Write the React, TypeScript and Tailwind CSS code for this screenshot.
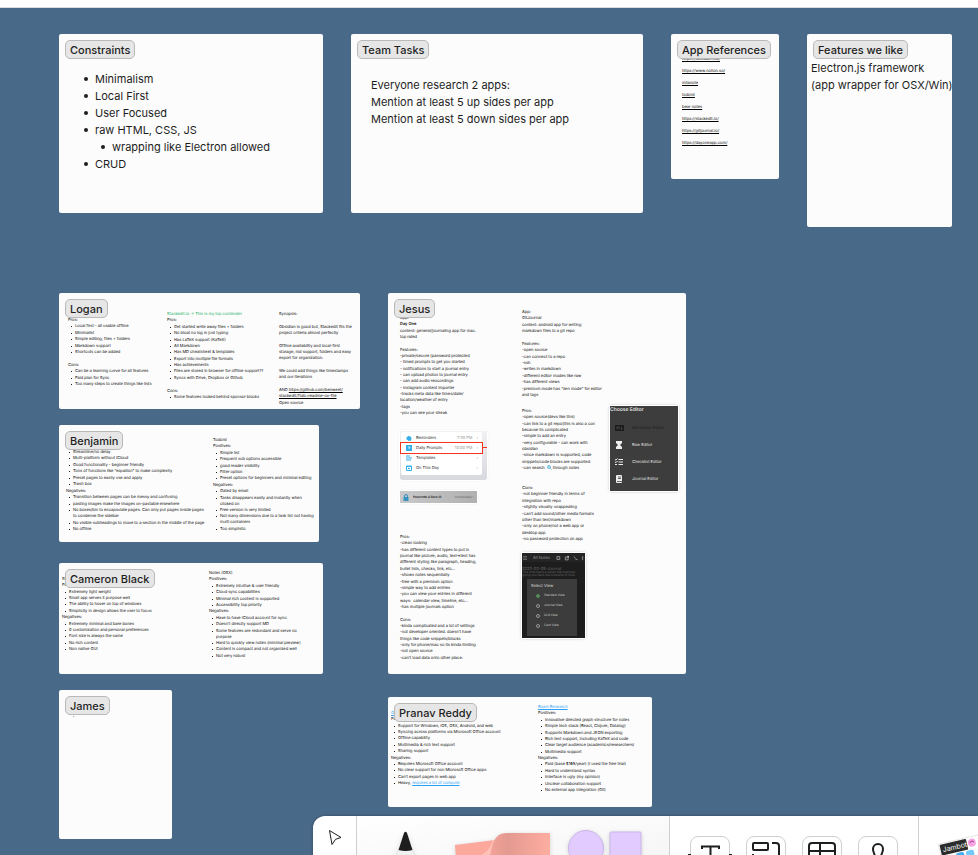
import type { ReactNode } from "react";

const link = "text-[#2aa1f5] underline";
const bullet =
  "relative before:absolute before:-left-[11px] before:top-[6px] before:size-1 before:rounded-full before:bg-[#1e1e1e]";

function Section({ title, className, children }: { title: string; className: string; children?: ReactNode }) {
  return (
    <section className={`absolute rounded-xs bg-[#fcfcfc] text-[#1e1e1e] ${className}`}>
      {children}
      <h2 className="absolute left-[6px] top-[6px] h-[19px] whitespace-nowrap rounded-[5px] border border-[#b9b9b9] bg-[#e6e6e6] px-1 text-[11px] font-medium leading-[18px] text-[#1e1e1e]">
        {title}
      </h2>
    </section>
  );
}

/** A text node on the canvas: its lines are spread evenly over its height. */
function Note({ className, children }: { className: string; children: ReactNode }) {
  return (
    <div
      className={`absolute flex flex-col justify-between whitespace-pre text-[4px] leading-[6px] text-black [text-rendering:geometricPrecision] ${className}`}
    >
      {children}
    </div>
  );
}

function Lines({ of }: { of: string[] }) {
  return (
    <>
      {of.map((line, i) => (
        <p key={i}>{line || "\u00a0"}</p>
      ))}
    </>
  );
}

function Bullets({ of }: { of: ReactNode[] }) {
  return (
    <ul className="contents">
      {of.map((item, i) => (
        <li key={i} className="relative pl-[7px] before:absolute before:left-[3px] before:top-[3px] before:size-px before:bg-[#1e1e1e]">
          {item}
        </li>
      ))}
    </ul>
  );
}

const references = [
  "https://obsidian.md/",
  "https://www.notion.so/",
  "milanote",
  "todoist",
  "bear notes",
  "https://stackedit.io/",
  "https://gitjournal.io/",
  "https://dayoneapp.com/",
];

function DayOneSettings() {
  const rows = [
    ["Reminders", "7:30 PM"],
    ["Daily Prompts", "10:00 PM"],
    ["Templates", ""],
    ["On This Day", ""],
  ];
  return (
    <div className="absolute left-[12px] top-[138px] h-[49px] w-[87px] rounded-xs bg-linear-to-b from-[#f1f1f4] to-[#d8d8df] p-px shadow-[0_0_2px_#0004] outline outline-white">
      <div className="h-[43px] w-[81px] rounded-xs bg-white pt-px">
        {rows.map(([name, time], i) => (
          <div key={name} className="flex h-[10px] items-center gap-1 pl-[5px] pr-1 text-[4px] leading-[6px] [text-rendering:geometricPrecision]">
            <svg viewBox="0 0 6 6" className="size-[6px]" fill="none" stroke="#35aee8">
              {i === 0 && <path d="M1 3.5a2 2 0 0 1 4 0v1H1zM2 5.3h3M.5 2.5h2" fill="#35aee8" />}
              {i === 1 && (
                <>
                  <rect x=".5" y=".5" width="5" height="5" fill="#35aee8" />
                  <path d="M2 2h2L3 4" stroke="#fff" strokeWidth=".7" />
                </>
              )}
              {i === 2 && <path d="M0 1h4M0 3h6M0 5h5" />}
              {i === 3 && <path d="M.5 1h5v4.5h-5zM.5 1.6h5M2 3.5h2" />}
            </svg>
            <span className="grow">{name}</span>
            <span className="text-[#999]">{time}</span>
            <span className="text-[#999]">›</span>
          </div>
        ))}
      </div>
      <div className="absolute left-0 top-[11px] h-[12px] w-[83px] border border-[#f5341d]" />
      <div className="absolute left-[83px] top-[16px] h-px w-[4px] bg-[#f5341d]" />
    </div>
  );
}

function PasscodeRow() {
  return (
    <div className="absolute left-[12px] top-[198px] flex h-[12px] w-[77px] items-center whitespace-nowrap bg-linear-to-r from-[#c9c9cb] to-[#b0b0b0] px-[3px] text-[3px] leading-[6px] shadow-[0_0_2px_#0004] outline outline-white [text-rendering:geometricPrecision]">
      <svg viewBox="0 0 6 7" className="h-[7px] w-[6px] shrink-0">
        <rect x=".5" y="3" width="5" height="4" fill="#3594bf" />
        <path d="M1.5 3V2a1.5 1.5 0 0 1 3 0v1" fill="none" stroke="#3594bf" />
      </svg>
      <span className="ml-[4px] grow font-semibold">Passcode &amp; Face ID</span>
      <span className="text-[#666]">Immediately ›</span>
    </div>
  );
}

function EditorMenu() {
  return (
    <div className="absolute left-[222px] top-[113px] h-[85px] w-[68px] bg-[#3d3d3d] text-[5px] leading-[8px] text-[#e6e6e6] shadow-[0_0_3px_#0006] outline outline-white [text-rendering:geometricPrecision]">
      <p className="font-medium text-[#eee]">Choose Editor</p>
      <ul className="flex flex-col gap-[9px] pl-[5px] pt-[10px] text-[4px]">
        <li className="flex h-2 items-center gap-2 text-[#1e1e1e]">
          <svg viewBox="0 0 9 6" className="h-[6px] w-[9px]">
            <rect width="9" height="6" fill="#1b1b1b" />
            <path d="M2 4.5v-3l1 1.5 1-1.5v3M6.5 1.5v3M5.5 3.5l1 1 1-1" fill="none" stroke="#555" strokeWidth=".6" />
          </svg>
          Markdown Editor
        </li>
        <li className="flex h-2 items-center gap-2">
          <svg viewBox="0 0 9 8" className="h-2 w-[9px]">
            <path d="M1 0h6v2L5 4l2 2v2H1V6l2-2-2-2z" fill="#eee" />
          </svg>
          Raw Editor
        </li>
        <li className="flex h-2 items-center gap-2">
          <svg viewBox="0 0 9 8" className="h-2 w-[9px]" fill="none" stroke="#eee">
            <path d="M3.5 1.5h4.5M3.5 4h4.5M3.5 6.5h4.5M0 1.5l1 .6L2.5.5M0 4l1 .6L2.5 3M0 6.5h2" />
          </svg>
          Checklist Editor
        </li>
        <li className="flex h-2 items-center gap-2">
          <svg viewBox="0 0 9 8" className="h-2 w-[9px]">
            <rect x="1" y="0" width="6" height="8" rx="1" fill="#eee" />
            <path d="M3 2h3M3 3.5h3M2 6.5h5" stroke="#444" strokeWidth=".8" />
          </svg>
          Journal Editor
        </li>
      </ul>
    </div>
  );
}

function ViewMenu() {
  return (
    <div className="absolute left-[134px] top-[260px] h-[85px] w-[63px] whitespace-nowrap bg-[#1d1d1d] text-[4px] leading-[5px] text-[#666] shadow-[0_0_3px_#0006] outline outline-white [text-rendering:geometricPrecision]">
      <div className="flex h-[9px] items-center gap-[6px] bg-[#242424] px-px text-[#999]">
        <svg viewBox="0 0 4 4" className="size-1 shrink-0" stroke="#888" strokeWidth=".6">
          <path d="M0 .5h4M0 2h4M0 3.5h4" />
        </svg>
        <span>All Notes</span>
        <svg viewBox="0 0 30 6" className="h-[6px] min-w-0 grow" fill="none" stroke="#999">
          <path d="M1 1.5h3v3H1zM10 2h3v3h-3zM19 1.5l2 2M21 4.5h2M28.5 1v4" />
          <circle cx="13" cy="1.5" r="1" fill="#bbb" stroke="none" />
        </svg>
      </div>
      <p className="pt-1">2022-02-09-Journal</p>
      <p className="text-[3px] leading-[3px]">This note starts a series that explores</p>
      <p className="text-[3px] leading-[3px]">giving you back the moments of time</p>
      <div className="absolute left-[5px] top-[26px] h-[57px] w-[50px] bg-[#3c3c3c] text-[#ccc]">
        <p className="pl-1 pt-1 text-[#ddd]">Select View</p>
        <ul className="flex flex-col gap-[5px] pl-[9px] pt-[5px] text-[3px]">
          {["Standard View", "Journal View", "Grid View", "Card View"].map((name, i) => (
            <li key={name} className="flex items-center gap-1">
              <svg viewBox="0 0 4 4" className="size-1" fill="none" strokeWidth=".7" stroke={i ? "#bbb" : "#5fae63"}>
                <circle cx="2" cy="2" r="1.5" />
                {i === 0 && <circle cx="2" cy="2" r=".6" fill="#5fae63" />}
              </svg>
              {name}
            </li>
          ))}
        </ul>
      </div>
    </div>
  );
}

function ToolCard({ label, children }: { label: string; children: ReactNode }) {
  return (
    <button aria-label={label} className="size-10 shrink-0 rounded-lg border border-[#cfcfcf] bg-white">
      <svg viewBox="0 0 40 40" className="-m-px size-10 overflow-visible" fill="none" stroke="#1e1e1e" strokeWidth="2">
        {children}
      </svg>
    </button>
  );
}

function Toolbar() {
  return (
    <nav
      aria-label="Tools"
      className="absolute bottom-0 left-[313px] right-0 flex h-[39px] overflow-hidden rounded-tl-xl bg-white shadow-[0_0_3px_#0005]"
    >
      <button aria-label="Select" className="flex w-[44px] shrink-0 justify-center border-r border-[#cfcfcf] pt-[13px]">
        <svg viewBox="0 0 15 17" className="h-[17px] w-[15px]" fill="none" stroke="#1e1e1e" strokeLinejoin="round">
          <path d="M2.5 1.5 14 8.5 8.5 10.3 5 15.5z" />
        </svg>
      </button>
      <div className="flex w-[313px] shrink-0 items-start border-r border-[#cfcfcf] bg-linear-to-br from-white to-[#f6f6f6] pl-6 pt-3">
        <button aria-label="Marker" className="w-[50px]">
          <svg viewBox="0 0 50 30" className="h-[30px] w-[50px] overflow-visible drop-shadow-md">
            <path d="M18 21q7-2 13 0l4 9H14z" fill="#f1f1f1" stroke="#ddd" strokeWidth=".6" />
            <path d="M23 5q1.5-2.5 3 0l5.5 17q-7 2-14 0z" fill="#1e1e1e" />
          </svg>
        </button>
        <button aria-label="Sticky note" className="ml-6 w-[96px]">
          <svg viewBox="0 0 96 30" className="h-[30px] w-[96px] overflow-visible drop-shadow-sm">
            <defs>
              <linearGradient id="fold" x1="0" x2="1">
                <stop offset="0" stopColor="#f3a398" />
                <stop offset=".3" stopColor="#e39a90" />
                <stop offset="1" stopColor="#ffada1" />
              </linearGradient>
            </defs>
            <path d="M0 17 40 12v18H1z" fill="#fca89c" />
            <path d="M22 30Q36 22 38 12l8 0v18z" fill="#ffc0b5" />
            <path d="M34 30c4-8 2-25 18-25h43v25z" fill="url(#fold)" />
          </svg>
        </button>
        <button aria-label="Shapes" className="ml-4 w-[76px]">
          <svg viewBox="0 0 76 30" className="h-[30px] w-[76px] overflow-visible drop-shadow-sm" fill="#e2ccff" stroke="#cab5e8">
            <circle cx="19" cy="20" r="17.5" />
            <rect x="43" y="4" width="31" height="31" rx="1" />
          </svg>
        </button>
      </div>
      <div className="flex w-[249px] shrink-0 gap-4 border-r border-[#cfcfcf] pl-5 pt-5">
        <ToolCard label="Text">
          <path d="M12 13v-2.5h17V13M20.5 10.5V30" />
          <path d="M-2 19h3M39 19h3" />
        </ToolCard>
        <ToolCard label="Section">
          <rect x="7" y="7" width="15" height="7" rx="1" />
          <path d="M26 7h4q3 0 3 3v20M7 30V18" />
        </ToolCard>
        <ToolCard label="Table">
          <rect x="7" y="7" width="26" height="24" rx="3" />
          <path d="M7 15h26M18 7v24M7 22h26" />
        </ToolCard>
        <ToolCard label="Stamp">
          <path d="M17 24c1-6-2-6-2-11a5 5 0 0 1 10 0c0 5-3 5-2 11" />
        </ToolCard>
      </div>
      <button aria-label="Widgets and stickers" className="shrink-0 pl-4">
        <svg viewBox="0 0 46 39" className="h-[39px] w-[46px]">
          <g transform="rotate(-13 18 34)">
            <rect x="5" y="25" width="44" height="30" fill="#fff" stroke="#e6e6e6" />
            <rect x="6" y="26" width="27" height="11" rx="1" fill="#2b2b2b" />
            <text x="8" y="34" fontSize="7" fill="#fff">Jambot</text>
            <circle cx="38" cy="31" r="4" fill="#f5a5e3" />
            <path d="M36 31q2-3 4 0" fill="none" stroke="#a83c91" />
            <rect x="20" y="38" width="8" height="6" rx="2" fill="#45aef0" />
            <rect x="30" y="38" width="8" height="6" rx="2" fill="#70c9f8" />
          </g>
        </svg>
      </button>
    </nav>
  );
}

export default function App() {
  return (
    <div className="flex h-screen flex-col overflow-hidden font-['Inter',sans-serif]">
      <header className="h-2 shrink-0 border-b border-[#d9dde2] bg-white" />
      <main className="relative grow overflow-hidden bg-[#496988]">
        <Section title="Constraints" className="left-[59px] top-[26px] h-[179px] w-[264px]">
          <ul className="pl-9 pt-[37px] text-[11px] leading-[17px]">
            {["Minimalism", "Local First", "User Focused", "raw HTML, CSS, JS"].map((item) => (
              <li key={item} className={bullet}>
                {item}
              </li>
            ))}
            <li>
              <ul className="pl-[17px]">
                <li className={bullet}>wrapping like Electron allowed</li>
              </ul>
            </li>
            <li className={bullet}>CRUD</li>
          </ul>
        </Section>

        <Section title="Team Tasks" className="left-[351px] top-[26px] h-[179px] w-[292px]">
          <div className="pl-5 pt-[43px] text-[11px] leading-[17px]">
            <p>Everyone research 2 apps:</p>
            <p>Mention at least 5 up sides per app</p>
            <p>Mention at least 5 down sides per app</p>
          </div>
        </Section>

        <Section title="App References" className="left-[671px] top-[26px] h-[145px] w-[108px]">
          <Note className="left-[11px] top-[22px] h-[90px]">
            {references.map((name) => (
              <a key={name} href="#" className="underline">
                {name}
              </a>
            ))}
          </Note>
        </Section>

        <Section title="Features we like" className="left-[807px] top-[26px] h-[193px] w-[145px]">
          <div className="whitespace-nowrap pl-1 pt-[26px] text-[11px] leading-[17px]">
            <p>Electron.js framework</p>
            <p>(app wrapper for OSX/Win)</p>
          </div>
        </Section>

        <Section title="Logan" className="left-[59px] top-[285px] h-[116px] w-[301px]">
          <Note className="left-[9px] top-[24px] h-[70px]">
            <Lines of={["Pros:"]} />
            <Bullets of={["Local first - all usable offline", "Minimalist", "Simple editing, files + folders", "Markdown support", "Shortcuts can be added"]} />
            <Lines of={["", "Cons:"]} />
            <Bullets of={["Can be a learning curve for all features", "Paid plan for Sync", "Too many steps to create things like lists"]} />
          </Note>
          <Note className="left-[108px] top-[18px] h-[89px]">
            <p className="text-[#14ae5c]">Stackedit.io → This is my top contender</p>
            <Lines of={["Pros:"]} />
            <Bullets
              of={[
                "Get started write away files + folders",
                "No bloat no log in just typing",
                "Has LaTeX support (KaTeX)",
                "All Markdown",
                "Has MD cheatsheet & templates",
                "Export into multiple file formats",
                "Has achievements",
                "Files are stored in browser for offline support??",
                "Syncs with Drive, Dropbox or Github",
              ]}
            />
            <Lines of={["", "Cons:"]} />
            <Bullets of={["Some features locked behind sponsor blocks"]} />
          </Note>
          <Note className="left-[220px] top-[18px] h-[95px]">
            <Lines
              of={[
                "Synopsis:",
                "",
                "Obsidian is good but, Stackedit fits the",
                "project criteria almost perfectly",
                "",
                "Offline availability and local-first",
                "storage, md support, folders and easy",
                "export for organization.",
                "",
                "We could add things like timestamps",
                "and our iterations",
                "",
              ]}
            />
            <p>
              AND <a href="#" className="underline">https://github.com/benweet/</a>
            </p>
            <a href="#" className="underline">stackedit/?tab=readme-ov-file</a>
            <Lines of={["Open source"]} />
          </Note>
        </Section>

        <Section title="Benjamin" className="left-[59px] top-[417px] h-[117px] w-[260px]">
          <Note className="left-[7px] top-[24px] h-[83px]">
            <Bullets
              of={[
                "Streamline/no delay",
                "Multi-platform without iCloud",
                "Good functionality - beginner friendly",
                "Tons of functions like “equation” to make complexity",
                "Preset pages to easily use and apply",
                "Trash box",
              ]}
            />
            <Lines of={["Negatives:"]} />
            <Bullets
              of={[
                "Transition between pages can be messy and confusing",
                "pasting images make the images un-pastable elsewhere",
                "No boxes/bin to encapsulate pages. Can only put pages inside pages\nto condense the sidebar",
                "No visible subheadings to move to a section in the middle of the page",
                "No offline",
              ]}
            />
          </Note>
          <Note className="left-[154px] top-[12px] h-[95px]">
            <Lines of={["Todoist", "Positives:"]} />
            <Bullets of={["Simple list", "Frequent sub options accessible", "good reader visibility", "Filter option", "Preset options for beginners and minimal editing"]} />
            <Lines of={["Negatives:"]} />
            <Bullets
              of={[
                "Gated by email",
                "Tasks disappears easily and instantly when\nclicked on",
                "Free version is very limited",
                "Not many dimensions due to a task list not having\nmulti containers",
                "Too simplistic",
              ]}
            />
          </Note>
        </Section>

        <Section title="Cameron Black" className="left-[59px] top-[555px] h-[111px] w-[264px]">
          <Note className="left-[3px] top-[13px] h-[76px]">
            <Lines of={["Stickies", "Positives:"]} />
            <Bullets of={["Extremely light weight", "Small app serves it purpose well", "The ability to hover on top of windows", "Simplicity in design allows the user to focus"]} />
            <Lines of={["Negatives:"]} />
            <Bullets of={["Extremely minimal and bare bones", "0 customization and personal preferences", "Font size is always the same", "No rich content", "Non native GUI"]} />
          </Note>
          <Note className="left-[150px] top-[7px] h-[89px]">
            <Lines of={["Notes (OSX)", "Positives:"]} />
            <Bullets of={["Extremely intuitive & user friendly", "Cloud sync capabilities", "Minimal rich content is supported", "Accessibility top priority"]} />
            <Lines of={["Negatives:"]} />
            <Bullets
              of={[
                "Have to have iCloud account for sync",
                "Doesn’t directly support MD",
                "Some features are redundant and serve no\npurpose",
                "Hard to quickly view notes (minimal preview)",
                "Content is compact and not organized well",
                "Not very robust",
              ]}
            />
          </Note>
        </Section>

        <Section title="James" className="left-[59px] top-[682px] h-[149px] w-[113px]">
          <Note className="left-[14px] top-[25px]">’</Note>
        </Section>

        <Section title="Jesus" className="left-[388px] top-[285px] h-[381px] w-[298px]">
          <Note className="left-[12px] top-[22px] h-[101px]">
            <Lines of={["App:"]} />
            <p className="font-semibold">Day One</p>
            <Lines
              of={[
                "content: general/journaling app for mac.",
                "top rated",
                "",
                "Features:",
                "-private/secure (password protected",
                "- timed prompts to get you started",
                "- notifications to start a journal entry",
                "- can upload photos to journal entry",
                "- can add audio reocordings",
                "- instagram content importer",
                "-tracks meta data like times/date/",
                "location/weather of entry",
                "-tags",
                "-you can see your streak",
              ]}
            />
          </Note>
          <DayOneSettings />
          <PasscodeRow />
          <Note className="left-[12px] top-[241px] h-[127px]">
            <Lines
              of={[
                "Pros:",
                "-clean looking",
                "-has different content types to put in",
                "journal like picture, audio, text->text has",
                "different styling like paragraph, heading,",
                "bullet lists, checks, link, etc...",
                "-shows notes sequentially",
                "-free with a premium option",
                "-simple way to add entries",
                "-you can view your entries in different",
                "ways:  calendar view, timeline, etc...",
                "-has multiple journals option",
                "",
                "Cons:",
                "-kinda complicated and a lot of settings",
                "-not developer oriented. doesn’t have",
                "things like code snippets/blocks",
                "-only for phone/mac so its kinda limiting",
                "-not open source",
                "-can’t load data onto other place.",
              ]}
            />
          </Note>
          <Note className="left-[134px] top-[16px] h-[89px]">
            <Lines
              of={[
                "App:",
                "GitJournal",
                "context: android app for writing",
                "markdown files to a git repo",
                "",
                "Features:",
                "-open source",
                "-can connect to a repo",
                "-ssh",
                "-writes in markdown",
                "-different editor modes like raw",
                "-has different views",
                "-premium mode has “zen mode” for editor",
                "and tags",
              ]}
            />
          </Note>
          <Note className="left-[134px] top-[115px] h-[63px]">
            <Lines
              of={[
                "Pros:",
                "-open source(devs like this)",
                "-can link to a git repo(this is also a con",
                "because its complicated",
                "-simple to add an entry",
                "-very configurable - can work with",
                "obsidian",
                "-since markdown is supported, code",
                "snippets/code blocks are supported",
              ]}
            />
            <p className="flex items-center">
              -can search{" "}
              <svg viewBox="0 0 5 5" className="mx-px size-[5px]" fill="#bfe6fa" stroke="#3f9fd0" strokeWidth=".7">
                <circle cx="2" cy="2" r="1.5" />
                <path d="m3.2 3.2 1.5 1.5" />
              </svg>
              through notes
            </p>
          </Note>
          <Note className="left-[134px] top-[192px] h-[57px]">
            <Lines
              of={[
                "Cons:",
                "-not beginner friendly in terms of",
                "integration with repo",
                "-slightly visually unappealing",
                "-can’t add sound/other media formats",
                "other than text/markdown",
                "-only on phone/not a web app or",
                "desktop app",
                "-no password protection on app",
              ]}
            />
          </Note>
          <EditorMenu />
          <ViewMenu />
        </Section>

        <Section title="Pranav Reddy" className="left-[388px] top-[689px] h-[110px] w-[264px]">
          <Note className="left-[3px] top-[13px] h-[76px]">
            <a href="#" className={link}>OneNote</a>
            <Lines of={["Positives:"]} />
            <Bullets
              of={[
                "Support for Windows, iOS, OSX, Android, and web",
                "Syncing across platforms via Microsoft Office account",
                "Offline capability",
                "Multimedia & rich text support",
                "Sharing support",
              ]}
            />
            <Lines of={["Negatives:"]} />
            <Bullets
              of={[
                "Requires Microsoft Office account",
                "No clear support for non Microsoft Office apps",
                "Can’t export pages in web app",
                <>
                  Heavy, <a href="#" className={link}>requires a lot of compute</a>
                </>,
              ]}
            />
          </Note>
          <Note className="left-[150px] top-[7px] h-[89px]">
            <a href="#" className={link}>Roam Research</a>
            <Lines of={["Positives:"]} />
            <Bullets
              of={[
                "Innovative directed graph structure for notes",
                "Simple tech stack (React, Clojure, Datalog)",
                "Supports Markdown and JSON exporting",
                "Rich text support, including KaTeX and code",
                "Clear target audience (academics/researchers)",
                "Multimedia support",
              ]}
            />
            <Lines of={["Negatives:"]} />
            <Bullets
              of={[
                "Paid (base $165/year) (I used the free trial)",
                "Hard to understand syntax",
                "Interface is ugly (my opinion)",
                "Unclear collaboration support",
                "No external app integration (Git)",
              ]}
            />
          </Note>
        </Section>

        <Toolbar />
      </main>
    </div>
  );
}
